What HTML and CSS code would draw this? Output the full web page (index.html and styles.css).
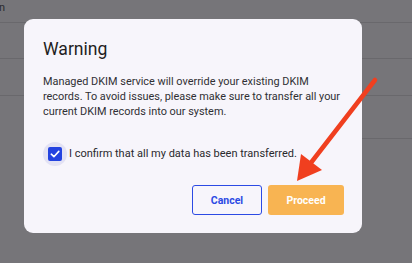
FILE: index.html
```html
<!DOCTYPE html>
<html lang="en">
<head>
<meta charset="utf-8">
<link rel="stylesheet" href="styles.css">
</head>
<body>
<div class="page">
  <div class="row row-first"><span class="clip-text">n</span></div>
  <div class="row row-2"></div>
  <div class="row row-3"></div>
  <div class="row row-4"></div>
</div>

<div class="dialog">
  <h2 class="title">Warning</h2>
  <p class="message">Managed DKIM service will override your existing DKIM records. To avoid issues, please make sure to transfer all your current DKIM records into our system.</p>
  <label class="confirm">
    <span class="halo">
      <span class="box">
        <svg width="10" height="10" viewBox="0 0 10 10"><path d="M1.3 5.2 L3.9 7.7 L8.8 2.4" fill="none" stroke="#fff" stroke-width="1.6" stroke-linecap="round" stroke-linejoin="round"/></svg>
      </span>
    </span>
    <span class="confirm-text">I confirm that all my data has been transferred.</span>
  </label>
  <div class="actions">
    <button class="btn btn-cancel">Cancel</button>
    <button class="btn btn-proceed">Proceed</button>
  </div>
</div>

<svg class="arrow" width="412" height="263" viewBox="0 0 412 263">
  <line x1="375" y1="80" x2="310" y2="164" stroke="#f03f1f" stroke-width="4.5" stroke-linecap="round"/>
  <polygon points="297,181 301,154 322,170" fill="#f03f1f"/>
</svg>
</body>
</html>
```

FILE: styles.css
```css
html, body {
  margin: 0;
  padding: 0;
}
body {
  width: 412px;
  height: 263px;
  overflow: hidden;
  background: #767579;
  font-family: Roboto, "Noto Sans", sans-serif;
  position: relative;
}
.page {
  display: flex;
  flex-direction: column;
}
.row {
  border-bottom: 1px solid #69686c;
  box-sizing: border-box;
}
.row-first {
  height: 23px;
  font-size: 11px;
  color: #2b2b2e;
  line-height: 16px;
}
.clip-text {
  display: inline-block;
  margin-left: -1px;
}
.row-2 { height: 36px; }
.row-3 { height: 37px; }
.row-4 { height: 43px; margin-left: 300px; }

.dialog {
  position: absolute;
  left: 24px;
  top: 19px;
  width: 338px;
  height: 214px;
  box-sizing: border-box;
  background: #f7f5fb;
  border-radius: 9px;
  padding: 19px 18px 18px 19px;
  display: flex;
  flex-direction: column;
}
.title {
  margin: 0;
  font-size: 17.6px;
  line-height: 22px;
  font-weight: 400;
  color: #1f1e22;
}
.message {
  margin: 14px 0 0;
  font-size: 10.9px;
  line-height: 15px;
  color: #303034;
}
.confirm {
  margin-top: 23px;
  display: flex;
  align-items: center;
  gap: 2px;
}
.halo {
  width: 24px;
  height: 24px;
  border-radius: 50%;
  background: #e3e2f4;
  display: flex;
  align-items: center;
  justify-content: center;
}
.box {
  width: 14px;
  height: 14px;
  border-radius: 2px;
  background: #2443e0;
  display: flex;
  align-items: center;
  justify-content: center;
}
.box svg { display: block; }
.confirm-text {
  font-size: 11px;
  line-height: 15px;
  color: #2a292d;
  margin-top: -1px;
}
.actions {
  margin-top: auto;
  display: flex;
  justify-content: flex-end;
  gap: 6px;
}
.btn {
  font-family: Roboto, "Noto Sans", sans-serif;
  font-size: 10.5px;
  font-weight: 700;
  height: 30px;
  border-radius: 3px;
  box-sizing: border-box;
  padding: 0;
}
.btn-cancel {
  width: 70px;
  background: transparent;
  border: 1px solid #2c4ae4;
  color: #2c4ae4;
}
.btn-proceed {
  width: 76px;
  background: #f8b452;
  border: none;
  color: #fff;
}
.arrow {
  position: absolute;
  left: 0;
  top: 0;
  pointer-events: none;
}
```
